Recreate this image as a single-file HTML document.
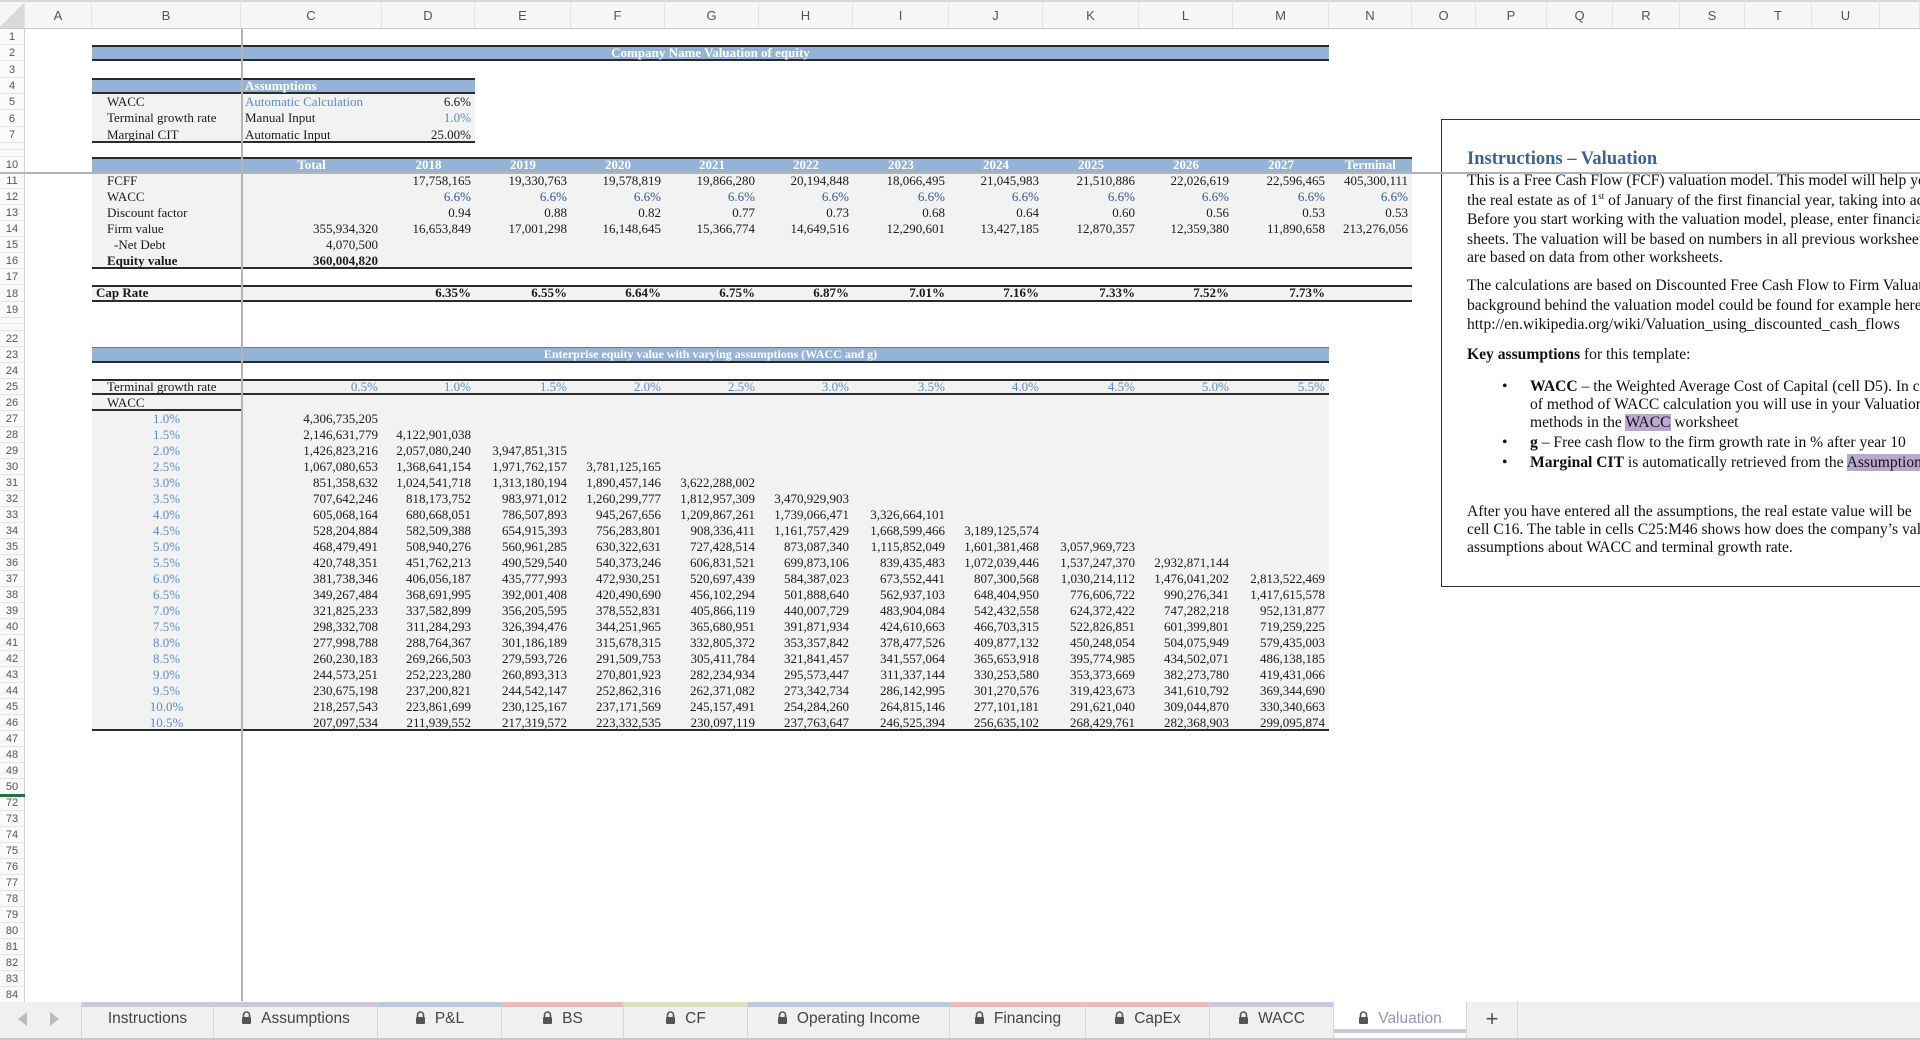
<!DOCTYPE html>
<html><head><meta charset="utf-8"><style>
*{margin:0;padding:0;box-sizing:border-box}
body{width:1920px;height:1040px;overflow:hidden;background:#fff;position:relative;font-family:"Liberation Serif",serif}
table{position:absolute;left:0;top:0;border-spacing:0;table-layout:fixed;width:1920px}
td{padding:0 4px 2px 4px;font-size:13px;line-height:13px;white-space:nowrap;overflow:hidden;color:#1a1a1a;vertical-align:middle}
td.h{padding:0;text-align:center;font:11px "Liberation Sans",sans-serif;color:#555;background:#fafafa;border-right:1px solid #cfcfcf;box-shadow:inset 0 -1px #e6e6e6}
tr.ch td{background:#f6f6f6;text-align:center;font:13px "Liberation Sans",sans-serif;color:#555;border-top:2px solid #d8d8d8;border-bottom:1px solid #c8c8c8;border-right:1px solid #e2e2e2;padding:0}
.g{background:#f2f2f2}
.bl{background:#95b3d7;color:#fff;font-weight:bold}
.r{text-align:right}.c{text-align:center}
.bt{box-shadow:inset 0 2px #2b2b2b}
.bb{box-shadow:inset 0 -2px #2b2b2b}
.btb{box-shadow:inset 0 2px #2b2b2b,inset 0 -2px #2b2b2b}
.lb{color:#5b8bc9}.db{color:#34578a}
b{font-weight:bold}
.vl{position:absolute;left:241px;top:29px;width:2px;height:972px;background:#b4b4b4}
.hl{position:absolute;left:0;top:172px;width:1441px;height:2px;background:#b4b4b4}
.hl2{position:absolute;left:1441px;top:172px;width:479px;height:2px;background:#b4b4b4}
.box{position:absolute;left:1441px;top:119px;width:520px;height:468px;border:1.5px solid #333;background:#fff;overflow:hidden}
.box div{position:absolute;left:25px;white-space:nowrap;font-size:15.6px;color:#111;line-height:18px}
.box .t{font-size:18.5px;font-weight:bold;color:#3d6593}
sup{font-size:9px;line-height:0;vertical-align:6px}
.hi{background:#b9a9d0}
.tabs{position:absolute;left:0;top:1002px;width:1920px;height:38px;background:#f0f0f0;border-bottom:2px solid #c8c8c8;font-family:"Liberation Sans",sans-serif}
.tab{position:absolute;top:0;height:36px;border-right:1px solid #d6d6d6;font-size:15.5px;color:#444;text-align:center;line-height:34px}
.tab i{position:absolute;left:0;right:0;top:0;height:5px}
.lk{display:inline-block;width:11px;height:13px;vertical-align:-1px;margin-right:9px}
.grn{position:absolute;left:0;top:794px;width:25px;height:3px;background:#207245}
</style></head><body>
<table>
<colgroup><col style="width:25px"><col style="width:67px"><col style="width:149px"><col style="width:141px"><col style="width:93px"><col style="width:96px"><col style="width:94px"><col style="width:94px"><col style="width:94px"><col style="width:96px"><col style="width:94px"><col style="width:96px"><col style="width:94px"><col style="width:96px"><col style="width:83px"><col style="width:64px"><col style="width:71px"><col style="width:66px"><col style="width:67px"><col style="width:65px"><col style="width:67px"><col style="width:68px"><col style="width:40px"></colgroup>
<tr class="ch" style="height:29px"><td style="background:linear-gradient(135deg,#f6f6f6 50%,#d9d9d9 50%)"></td><td>A</td><td>B</td><td>C</td><td>D</td><td>E</td><td>F</td><td>G</td><td>H</td><td>I</td><td>J</td><td>K</td><td>L</td><td>M</td><td>N</td><td>O</td><td>P</td><td>Q</td><td>R</td><td>S</td><td>T</td><td>U</td><td></td></tr>
<tr style="height:16px"><td class="h">1</td><td colspan="22"></td></tr>
<tr style="height:16px"><td class="h">2</td><td></td><td colspan="12" class="bl c" style="box-shadow:inset 0 2px #2b2b2b,inset 0 -2px #2b2b2b">Company Name Valuation of equity</td><td colspan="9"></td></tr>
<tr style="height:17px"><td class="h">3</td><td colspan="22"></td></tr>
<tr style="height:16px"><td class="h">4</td><td></td><td class="bl btb"></td><td colspan="2" class="bl btb">Assumptions</td><td colspan="18"></td></tr>
<tr style="height:16px"><td class="h">5</td><td></td><td class="g" style="padding-left:15px">WACC</td><td class="g lb">Automatic Calculation</td><td class="g r">6.6%</td><td colspan="18"></td></tr>
<tr style="height:17px"><td class="h">6</td><td></td><td class="g" style="padding-left:15px">Terminal growth rate</td><td class="g">Manual Input</td><td class="g r lb">1.0%</td><td colspan="18"></td></tr>
<tr style="height:16px"><td class="h">7</td><td></td><td class="g bb" style="padding-left:15px">Marginal CIT</td><td class="g bb">Automatic Input</td><td class="g r bb">25.00%</td><td colspan="18"></td></tr>
<tr style="height:7px"><td class="h" style="font-size:0"></td><td colspan="22"></td></tr>
<tr style="height:7px"><td class="h" style="font-size:0"></td><td colspan="22"></td></tr>
<tr style="height:16px"><td class="h">10</td><td></td><td class="bl bt"></td><td class="bl bt c">Total</td><td class="bl bt c">2018</td><td class="bl bt c">2019</td><td class="bl bt c">2020</td><td class="bl bt c">2021</td><td class="bl bt c">2022</td><td class="bl bt c">2023</td><td class="bl bt c">2024</td><td class="bl bt c">2025</td><td class="bl bt c">2026</td><td class="bl bt c">2027</td><td class="bl bt c">Terminal</td><td colspan="8"></td></tr>
<tr style="height:16px"><td class="h">11</td><td></td><td class="g" style="padding-left:15px">FCFF</td><td class="g"></td><td class="g r">17,758,165</td><td class="g r">19,330,763</td><td class="g r">19,578,819</td><td class="g r">19,866,280</td><td class="g r">20,194,848</td><td class="g r">18,066,495</td><td class="g r">21,045,983</td><td class="g r">21,510,886</td><td class="g r">22,026,619</td><td class="g r">22,596,465</td><td class="g r">405,300,111</td><td colspan="8"></td></tr>
<tr style="height:16px"><td class="h">12</td><td></td><td class="g" style="padding-left:15px">WACC</td><td class="g"></td><td class="g r db">6.6%</td><td class="g r db">6.6%</td><td class="g r db">6.6%</td><td class="g r db">6.6%</td><td class="g r db">6.6%</td><td class="g r db">6.6%</td><td class="g r db">6.6%</td><td class="g r db">6.6%</td><td class="g r db">6.6%</td><td class="g r db">6.6%</td><td class="g r db">6.6%</td><td colspan="8"></td></tr>
<tr style="height:16px"><td class="h">13</td><td></td><td class="g" style="padding-left:15px">Discount factor</td><td class="g"></td><td class="g r">0.94</td><td class="g r">0.88</td><td class="g r">0.82</td><td class="g r">0.77</td><td class="g r">0.73</td><td class="g r">0.68</td><td class="g r">0.64</td><td class="g r">0.60</td><td class="g r">0.56</td><td class="g r">0.53</td><td class="g r">0.53</td><td colspan="8"></td></tr>
<tr style="height:16px"><td class="h">14</td><td></td><td class="g" style="padding-left:15px">Firm value</td><td class="g r">355,934,320</td><td class="g r">16,653,849</td><td class="g r">17,001,298</td><td class="g r">16,148,645</td><td class="g r">15,366,774</td><td class="g r">14,649,516</td><td class="g r">12,290,601</td><td class="g r">13,427,185</td><td class="g r">12,870,357</td><td class="g r">12,359,380</td><td class="g r">11,890,658</td><td class="g r">213,276,056</td><td colspan="8"></td></tr>
<tr style="height:16px"><td class="h">15</td><td></td><td class="g" style="padding-left:22px">-Net Debt</td><td class="g r">4,070,500</td><td class="g"></td><td class="g"></td><td class="g"></td><td class="g"></td><td class="g"></td><td class="g"></td><td class="g"></td><td class="g"></td><td class="g"></td><td class="g"></td><td class="g"></td><td colspan="8"></td></tr>
<tr style="height:16px"><td class="h">16</td><td></td><td class="g bb" style="padding-left:15px"><b>Equity value</b></td><td class="g r bb"><b>360,004,820</b></td><td class="g bb"></td><td class="g bb"></td><td class="g bb"></td><td class="g bb"></td><td class="g bb"></td><td class="g bb"></td><td class="g bb"></td><td class="g bb"></td><td class="g bb"></td><td class="g bb"></td><td class="g bb"></td><td colspan="8"></td></tr>
<tr style="height:16px"><td class="h">17</td><td colspan="22"></td></tr>
<tr style="height:17px"><td class="h">18</td><td></td><td class="g btb"><b>Cap Rate</b></td><td class="g btb"></td><td class="g r btb"><b>6.35%</b></td><td class="g r btb"><b>6.55%</b></td><td class="g r btb"><b>6.64%</b></td><td class="g r btb"><b>6.75%</b></td><td class="g r btb"><b>6.87%</b></td><td class="g r btb"><b>7.01%</b></td><td class="g r btb"><b>7.16%</b></td><td class="g r btb"><b>7.33%</b></td><td class="g r btb"><b>7.52%</b></td><td class="g r btb"><b>7.73%</b></td><td class="g btb"></td><td colspan="8"></td></tr>
<tr style="height:16px"><td class="h">19</td><td colspan="22"></td></tr>
<tr style="height:6px"><td class="h" style="font-size:0"></td><td colspan="22"></td></tr>
<tr style="height:7px"><td class="h" style="font-size:0"></td><td colspan="22"></td></tr>
<tr style="height:16px"><td class="h">22</td><td colspan="22"></td></tr>
<tr style="height:16px"><td class="h">23</td><td></td><td colspan="12" class="bl c" style="box-shadow:inset 0 1px #777,inset 0 -2px #2b2b2b;font-size:12px">Enterprise equity value with varying assumptions (WACC and g)</td><td colspan="9"></td></tr>
<tr style="height:16px"><td class="h">24</td><td colspan="22"></td></tr>
<tr style="height:16px"><td class="h">25</td><td></td><td class="g btb" style="padding-left:15px">Terminal growth rate</td><td class="g r btb lb">0.5%</td><td class="g r btb lb">1.0%</td><td class="g r btb lb">1.5%</td><td class="g r btb lb">2.0%</td><td class="g r btb lb">2.5%</td><td class="g r btb lb">3.0%</td><td class="g r btb lb">3.5%</td><td class="g r btb lb">4.0%</td><td class="g r btb lb">4.5%</td><td class="g r btb lb">5.0%</td><td class="g r btb lb">5.5%</td><td colspan="9"></td></tr>
<tr style="height:16px"><td class="h">26</td><td></td><td class="g bb" style="padding-left:15px">WACC</td><td class="g"></td><td class="g"></td><td class="g"></td><td class="g"></td><td class="g"></td><td class="g"></td><td class="g"></td><td class="g"></td><td class="g"></td><td class="g"></td><td class="g"></td><td colspan="9"></td></tr>
<tr style="height:16px"><td class="h">27</td><td></td><td class="g c lb">1.0%</td><td class="g r">4,306,735,205</td><td class="g r"></td><td class="g r"></td><td class="g r"></td><td class="g r"></td><td class="g r"></td><td class="g r"></td><td class="g r"></td><td class="g r"></td><td class="g r"></td><td class="g r"></td><td colspan="9"></td></tr>
<tr style="height:16px"><td class="h">28</td><td></td><td class="g c lb">1.5%</td><td class="g r">2,146,631,779</td><td class="g r">4,122,901,038</td><td class="g r"></td><td class="g r"></td><td class="g r"></td><td class="g r"></td><td class="g r"></td><td class="g r"></td><td class="g r"></td><td class="g r"></td><td class="g r"></td><td colspan="9"></td></tr>
<tr style="height:16px"><td class="h">29</td><td></td><td class="g c lb">2.0%</td><td class="g r">1,426,823,216</td><td class="g r">2,057,080,240</td><td class="g r">3,947,851,315</td><td class="g r"></td><td class="g r"></td><td class="g r"></td><td class="g r"></td><td class="g r"></td><td class="g r"></td><td class="g r"></td><td class="g r"></td><td colspan="9"></td></tr>
<tr style="height:16px"><td class="h">30</td><td></td><td class="g c lb">2.5%</td><td class="g r">1,067,080,653</td><td class="g r">1,368,641,154</td><td class="g r">1,971,762,157</td><td class="g r">3,781,125,165</td><td class="g r"></td><td class="g r"></td><td class="g r"></td><td class="g r"></td><td class="g r"></td><td class="g r"></td><td class="g r"></td><td colspan="9"></td></tr>
<tr style="height:16px"><td class="h">31</td><td></td><td class="g c lb">3.0%</td><td class="g r">851,358,632</td><td class="g r">1,024,541,718</td><td class="g r">1,313,180,194</td><td class="g r">1,890,457,146</td><td class="g r">3,622,288,002</td><td class="g r"></td><td class="g r"></td><td class="g r"></td><td class="g r"></td><td class="g r"></td><td class="g r"></td><td colspan="9"></td></tr>
<tr style="height:16px"><td class="h">32</td><td></td><td class="g c lb">3.5%</td><td class="g r">707,642,246</td><td class="g r">818,173,752</td><td class="g r">983,971,012</td><td class="g r">1,260,299,777</td><td class="g r">1,812,957,309</td><td class="g r">3,470,929,903</td><td class="g r"></td><td class="g r"></td><td class="g r"></td><td class="g r"></td><td class="g r"></td><td colspan="9"></td></tr>
<tr style="height:16px"><td class="h">33</td><td></td><td class="g c lb">4.0%</td><td class="g r">605,068,164</td><td class="g r">680,668,051</td><td class="g r">786,507,893</td><td class="g r">945,267,656</td><td class="g r">1,209,867,261</td><td class="g r">1,739,066,471</td><td class="g r">3,326,664,101</td><td class="g r"></td><td class="g r"></td><td class="g r"></td><td class="g r"></td><td colspan="9"></td></tr>
<tr style="height:16px"><td class="h">34</td><td></td><td class="g c lb">4.5%</td><td class="g r">528,204,884</td><td class="g r">582,509,388</td><td class="g r">654,915,393</td><td class="g r">756,283,801</td><td class="g r">908,336,411</td><td class="g r">1,161,757,429</td><td class="g r">1,668,599,466</td><td class="g r">3,189,125,574</td><td class="g r"></td><td class="g r"></td><td class="g r"></td><td colspan="9"></td></tr>
<tr style="height:16px"><td class="h">35</td><td></td><td class="g c lb">5.0%</td><td class="g r">468,479,491</td><td class="g r">508,940,276</td><td class="g r">560,961,285</td><td class="g r">630,322,631</td><td class="g r">727,428,514</td><td class="g r">873,087,340</td><td class="g r">1,115,852,049</td><td class="g r">1,601,381,468</td><td class="g r">3,057,969,723</td><td class="g r"></td><td class="g r"></td><td colspan="9"></td></tr>
<tr style="height:16px"><td class="h">36</td><td></td><td class="g c lb">5.5%</td><td class="g r">420,748,351</td><td class="g r">451,762,213</td><td class="g r">490,529,540</td><td class="g r">540,373,246</td><td class="g r">606,831,521</td><td class="g r">699,873,106</td><td class="g r">839,435,483</td><td class="g r">1,072,039,446</td><td class="g r">1,537,247,370</td><td class="g r">2,932,871,144</td><td class="g r"></td><td colspan="9"></td></tr>
<tr style="height:16px"><td class="h">37</td><td></td><td class="g c lb">6.0%</td><td class="g r">381,738,346</td><td class="g r">406,056,187</td><td class="g r">435,777,993</td><td class="g r">472,930,251</td><td class="g r">520,697,439</td><td class="g r">584,387,023</td><td class="g r">673,552,441</td><td class="g r">807,300,568</td><td class="g r">1,030,214,112</td><td class="g r">1,476,041,202</td><td class="g r">2,813,522,469</td><td colspan="9"></td></tr>
<tr style="height:16px"><td class="h">38</td><td></td><td class="g c lb">6.5%</td><td class="g r">349,267,484</td><td class="g r">368,691,995</td><td class="g r">392,001,408</td><td class="g r">420,490,690</td><td class="g r">456,102,294</td><td class="g r">501,888,640</td><td class="g r">562,937,103</td><td class="g r">648,404,950</td><td class="g r">776,606,722</td><td class="g r">990,276,341</td><td class="g r">1,417,615,578</td><td colspan="9"></td></tr>
<tr style="height:16px"><td class="h">39</td><td></td><td class="g c lb">7.0%</td><td class="g r">321,825,233</td><td class="g r">337,582,899</td><td class="g r">356,205,595</td><td class="g r">378,552,831</td><td class="g r">405,866,119</td><td class="g r">440,007,729</td><td class="g r">483,904,084</td><td class="g r">542,432,558</td><td class="g r">624,372,422</td><td class="g r">747,282,218</td><td class="g r">952,131,877</td><td colspan="9"></td></tr>
<tr style="height:16px"><td class="h">40</td><td></td><td class="g c lb">7.5%</td><td class="g r">298,332,708</td><td class="g r">311,284,293</td><td class="g r">326,394,476</td><td class="g r">344,251,965</td><td class="g r">365,680,951</td><td class="g r">391,871,934</td><td class="g r">424,610,663</td><td class="g r">466,703,315</td><td class="g r">522,826,851</td><td class="g r">601,399,801</td><td class="g r">719,259,225</td><td colspan="9"></td></tr>
<tr style="height:16px"><td class="h">41</td><td></td><td class="g c lb">8.0%</td><td class="g r">277,998,788</td><td class="g r">288,764,367</td><td class="g r">301,186,189</td><td class="g r">315,678,315</td><td class="g r">332,805,372</td><td class="g r">353,357,842</td><td class="g r">378,477,526</td><td class="g r">409,877,132</td><td class="g r">450,248,054</td><td class="g r">504,075,949</td><td class="g r">579,435,003</td><td colspan="9"></td></tr>
<tr style="height:16px"><td class="h">42</td><td></td><td class="g c lb">8.5%</td><td class="g r">260,230,183</td><td class="g r">269,266,503</td><td class="g r">279,593,726</td><td class="g r">291,509,753</td><td class="g r">305,411,784</td><td class="g r">321,841,457</td><td class="g r">341,557,064</td><td class="g r">365,653,918</td><td class="g r">395,774,985</td><td class="g r">434,502,071</td><td class="g r">486,138,185</td><td colspan="9"></td></tr>
<tr style="height:16px"><td class="h">43</td><td></td><td class="g c lb">9.0%</td><td class="g r">244,573,251</td><td class="g r">252,223,280</td><td class="g r">260,893,313</td><td class="g r">270,801,923</td><td class="g r">282,234,934</td><td class="g r">295,573,447</td><td class="g r">311,337,144</td><td class="g r">330,253,580</td><td class="g r">353,373,669</td><td class="g r">382,273,780</td><td class="g r">419,431,066</td><td colspan="9"></td></tr>
<tr style="height:16px"><td class="h">44</td><td></td><td class="g c lb">9.5%</td><td class="g r">230,675,198</td><td class="g r">237,200,821</td><td class="g r">244,542,147</td><td class="g r">252,862,316</td><td class="g r">262,371,082</td><td class="g r">273,342,734</td><td class="g r">286,142,995</td><td class="g r">301,270,576</td><td class="g r">319,423,673</td><td class="g r">341,610,792</td><td class="g r">369,344,690</td><td colspan="9"></td></tr>
<tr style="height:16px"><td class="h">45</td><td></td><td class="g c lb">10.0%</td><td class="g r">218,257,543</td><td class="g r">223,861,699</td><td class="g r">230,125,167</td><td class="g r">237,171,569</td><td class="g r">245,157,491</td><td class="g r">254,284,260</td><td class="g r">264,815,146</td><td class="g r">277,101,181</td><td class="g r">291,621,040</td><td class="g r">309,044,870</td><td class="g r">330,340,663</td><td colspan="9"></td></tr>
<tr style="height:16px"><td class="h">46</td><td></td><td class="g c lb bb">10.5%</td><td class="g r bb">207,097,534</td><td class="g r bb">211,939,552</td><td class="g r bb">217,319,572</td><td class="g r bb">223,332,535</td><td class="g r bb">230,097,119</td><td class="g r bb">237,763,647</td><td class="g r bb">246,525,394</td><td class="g r bb">256,635,102</td><td class="g r bb">268,429,761</td><td class="g r bb">282,368,903</td><td class="g r bb">299,095,874</td><td colspan="9"></td></tr>
<tr style="height:16px"><td class="h">47</td><td colspan="22"></td></tr>
<tr style="height:16px"><td class="h">48</td><td colspan="22"></td></tr>
<tr style="height:16px"><td class="h">49</td><td colspan="22"></td></tr>
<tr style="height:16px"><td class="h">50</td><td colspan="22"></td></tr>
<tr style="height:16px"><td class="h">72</td><td colspan="22"></td></tr>
<tr style="height:16px"><td class="h">73</td><td colspan="22"></td></tr>
<tr style="height:16px"><td class="h">74</td><td colspan="22"></td></tr>
<tr style="height:16px"><td class="h">75</td><td colspan="22"></td></tr>
<tr style="height:16px"><td class="h">76</td><td colspan="22"></td></tr>
<tr style="height:16px"><td class="h">77</td><td colspan="22"></td></tr>
<tr style="height:16px"><td class="h">78</td><td colspan="22"></td></tr>
<tr style="height:16px"><td class="h">79</td><td colspan="22"></td></tr>
<tr style="height:16px"><td class="h">80</td><td colspan="22"></td></tr>
<tr style="height:16px"><td class="h">81</td><td colspan="22"></td></tr>
<tr style="height:16px"><td class="h">82</td><td colspan="22"></td></tr>
<tr style="height:16px"><td class="h">83</td><td colspan="22"></td></tr>
<tr style="height:16px"><td class="h">84</td><td colspan="22"></td></tr>
</table>
<div class="vl"></div>
<div class="hl"></div>
<div class="grn"></div>
<div class="box">
<div class="t" style="top:30px">Instructions – Valuation</div>
<div style="top:52px">This is a Free Cash Flow (FCF) valuation model. This model will help you estimate</div>
<div style="top:72px">the real estate as of 1<sup>st</sup> of January of the first financial year, taking into account</div>
<div style="top:91px">Before you start working with the valuation model, please, enter financial data</div>
<div style="top:111px">sheets. The valuation will be based on numbers in all previous worksheets that</div>
<div style="top:129px">are based on data from other worksheets.</div>
<div style="top:157px">The calculations are based on Discounted Free Cash Flow to Firm Valuation</div>
<div style="top:177px">background behind the valuation model could be found for example here:</div>
<div style="top:196px">http://en.wikipedia.org/wiki/Valuation_using_discounted_cash_flows</div>
<div style="top:226px"><b>Key assumptions</b> for this template:</div>
<div style="top:258px;left:60px">•</div><div style="top:258px;left:88px"><b>WACC</b> – the Weighted Average Cost of Capital (cell D5). In certain</div>
<div style="top:276px;left:88px">of method of WACC calculation you will use in your Valuation</div>
<div style="top:294px;left:88px">methods in the <span class="hi">WACC</span> worksheet</div>
<div style="top:314px;left:60px">•</div><div style="top:314px;left:88px"><b>g</b> – Free cash flow to the firm growth rate in % after year 10</div>
<div style="top:334px;left:60px">•</div><div style="top:334px;left:88px"><b>Marginal CIT</b> is automatically retrieved from the <span class="hi">Assumptions</span></div>
<div style="top:383px">After you have entered all the assumptions, the real estate value will be</div>
<div style="top:401px">cell C16. The table in cells C25:M46 shows how does the company’s value</div>
<div style="top:419px">assumptions about WACC and terminal growth rate.</div>
</div>
<div class="hl2"></div>
<div class="tabs">
<div style="position:absolute;left:18px;top:10px;width:0;height:0;border-top:7px solid transparent;border-bottom:7px solid transparent;border-right:9px solid #bbb"></div>
<div style="position:absolute;left:50px;top:10px;width:0;height:0;border-top:7px solid transparent;border-bottom:7px solid transparent;border-left:9px solid #bbb"></div>
<div class="tab" style="left:81px;width:133px;border-left:1px solid #d6d6d6"><i style="background:#cfc6dc"></i>Instructions</div>
<div class="tab" style="left:214px;width:164px"><i style="background:#cfc6dc"></i><svg class="lk" viewBox="0 0 11 13"><path d="M2.5 6V4a3 3 0 0 1 6 0v2" fill="none" stroke="#555" stroke-width="1.6"/><rect x="1" y="6" width="9" height="7" rx="1" fill="#555"/></svg>Assumptions</div>
<div class="tab" style="left:378px;width:124px"><i style="background:#b9cbe3"></i><svg class="lk" viewBox="0 0 11 13"><path d="M2.5 6V4a3 3 0 0 1 6 0v2" fill="none" stroke="#555" stroke-width="1.6"/><rect x="1" y="6" width="9" height="7" rx="1" fill="#555"/></svg>P&amp;L</div>
<div class="tab" style="left:502px;width:122px"><i style="background:#e6bcbc"></i><svg class="lk" viewBox="0 0 11 13"><path d="M2.5 6V4a3 3 0 0 1 6 0v2" fill="none" stroke="#555" stroke-width="1.6"/><rect x="1" y="6" width="9" height="7" rx="1" fill="#555"/></svg>BS</div>
<div class="tab" style="left:624px;width:124px"><i style="background:#d8e4c0"></i><svg class="lk" viewBox="0 0 11 13"><path d="M2.5 6V4a3 3 0 0 1 6 0v2" fill="none" stroke="#555" stroke-width="1.6"/><rect x="1" y="6" width="9" height="7" rx="1" fill="#555"/></svg>CF</div>
<div class="tab" style="left:748px;width:202px"><i style="background:#b9cbe3"></i><svg class="lk" viewBox="0 0 11 13"><path d="M2.5 6V4a3 3 0 0 1 6 0v2" fill="none" stroke="#555" stroke-width="1.6"/><rect x="1" y="6" width="9" height="7" rx="1" fill="#555"/></svg>Operating Income</div>
<div class="tab" style="left:950px;width:136px"><i style="background:#e6bcbc"></i><svg class="lk" viewBox="0 0 11 13"><path d="M2.5 6V4a3 3 0 0 1 6 0v2" fill="none" stroke="#555" stroke-width="1.6"/><rect x="1" y="6" width="9" height="7" rx="1" fill="#555"/></svg>Financing</div>
<div class="tab" style="left:1086px;width:124px"><i style="background:#e6bcbc"></i><svg class="lk" viewBox="0 0 11 13"><path d="M2.5 6V4a3 3 0 0 1 6 0v2" fill="none" stroke="#555" stroke-width="1.6"/><rect x="1" y="6" width="9" height="7" rx="1" fill="#555"/></svg>CapEx</div>
<div class="tab" style="left:1210px;width:124px"><i style="background:#cfc6dc"></i><svg class="lk" viewBox="0 0 11 13"><path d="M2.5 6V4a3 3 0 0 1 6 0v2" fill="none" stroke="#555" stroke-width="1.6"/><rect x="1" y="6" width="9" height="7" rx="1" fill="#555"/></svg>WACC</div>
<div class="tab" style="left:1334px;width:133px;background:#fff;color:#9f92bf"><i style="top:27px;height:4px;background:#cfc6dc"></i><svg class="lk" viewBox="0 0 11 13"><path d="M2.5 6V4a3 3 0 0 1 6 0v2" fill="none" stroke="#555" stroke-width="1.6"/><rect x="1" y="6" width="9" height="7" rx="1" fill="#555"/></svg>Valuation</div>
<div class="tab" style="left:1467px;width:51px;font-size:22px;color:#555">+</div>
</div>
</body></html>
